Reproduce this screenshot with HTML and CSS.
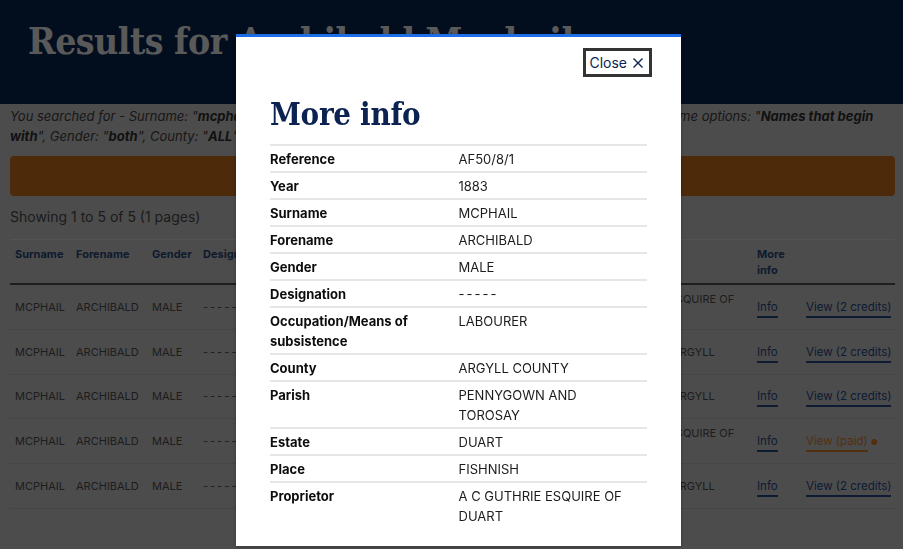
FILE: index.html
```html
<!DOCTYPE html>
<html lang="en">
<head>
    <meta charset="UTF-8">
    <meta name="viewport" content="width=device-width, initial-scale=1.0">
    <title>Results for Archibald Mcphail</title>
    <link rel="stylesheet" href="styles.css">
</head>
<body>
    <header class="page-header">
        <h1>Results for Archibald Mcphail</h1>
    </header>

    <main class="content">
        <p class="searched">
            You searched for - Surname: "<b>mcphail</b>", Surname options: "<b>Exact spellings</b>", Forename: "<b>archibald</b>", Forename options: "<b>Names that begin with</b>", Gender: "<b>both</b>", County: "<b>ALL</b>"
        </p>
        <div class="notice"></div>
        <p class="showing">Showing 1 to 5 of 5 (1 pages)</p>

        <table class="results">
            <colgroup>
                <col style="width: 61px">
                <col style="width: 76px">
                <col style="width: 51px">
                <col style="width: 80px">
                <col style="width: 100px">
                <col style="width: 213px">
                <col style="width: 161px">
                <col style="width: 49px">
                <col style="width: 94px">
            </colgroup>
            <thead>
                <tr>
                    <th>Surname</th>
                    <th>Forename</th>
                    <th>Gender</th>
                    <th>Designation</th>
                    <th>Occupation</th>
                    <th>Parish</th>
                    <th>Proprietor</th>
                    <th>More info</th>
                    <th></th>
                </tr>
            </thead>
            <tbody id="rows"></tbody>
        </table>
    </main>

    <div class="overlay">
        <div class="modal">
            <div class="modal-top">
                <button class="close-btn">Close
                    <svg width="12" height="12" viewBox="0 0 12 12"><path d="M1.5 1.5L10.5 10.5M10.5 1.5L1.5 10.5" stroke="#0c2352" stroke-width="1.4" fill="none"/></svg>
                </button>
            </div>
            <h2>More info</h2>
            <table class="info">
                <tr><th>Reference</th><td>AF50/8/1</td></tr>
                <tr><th>Year</th><td>1883</td></tr>
                <tr><th>Surname</th><td>MCPHAIL</td></tr>
                <tr><th>Forename</th><td>ARCHIBALD</td></tr>
                <tr><th>Gender</th><td>MALE</td></tr>
                <tr><th>Designation</th><td class="dashes">-----</td></tr>
                <tr><th>Occupation/Means of subsistence</th><td>LABOURER</td></tr>
                <tr><th>County</th><td>ARGYLL COUNTY</td></tr>
                <tr><th>Parish</th><td>PENNYGOWN AND TOROSAY</td></tr>
                <tr><th>Estate</th><td>DUART</td></tr>
                <tr><th>Place</th><td>FISHNISH</td></tr>
                <tr><th>Proprietor</th><td>A C GUTHRIE ESQUIRE OF DUART</td></tr>
            </table>
        </div>
    </div>

    <script>
        const results = [
            { proprietor: 'A C GUTHRIE ESQUIRE OF DUART', paid: false },
            { proprietor: 'THE DUKE OF ARGYLL', paid: false },
            { proprietor: 'THE DUKE OF ARGYLL', paid: false },
            { proprietor: 'A C GUTHRIE ESQUIRE OF DUART', paid: true },
            { proprietor: 'THE DUKE OF ARGYLL', paid: false }
        ];

        const rows = document.getElementById('rows');

        results.forEach(r => {
            const tr = document.createElement('tr');
            const view = r.paid
                ? '<a class="view paid" href="#">View (paid)</a> <span class="dot">&#9679;</span>'
                : '<a class="view" href="#">View (2 credits)</a>';
            tr.innerHTML = `
                <td>MCPHAIL</td>
                <td>ARCHIBALD</td>
                <td>MALE</td>
                <td class="dashes">-----</td>
                <td>LABOURER</td>
                <td>PENNYGOWN AND TOROSAY</td>
                <td>${r.proprietor}</td>
                <td><a class="info-link" href="#">Info</a></td>
                <td class="nowrap">${view}</td>`;
            rows.appendChild(tr);
        });
    </script>
</body>
</html>
```

FILE: styles.css
```css
body {
    margin: 0;
    font-family: Inter, "Noto Sans", sans-serif;
    background-color: #dadada;
    color: #444444;
    overflow: hidden;
}

.page-header {
    background-color: #062556;
    height: 104px;
    padding: 0 28px;
}

.page-header h1 {
    margin: 0;
    padding-top: 19px;
    font-family: "DejaVu Serif", serif;
    font-stretch: condensed;
    font-size: 37px;
    font-weight: bold;
    color: #ffffff;
    letter-spacing: -0.5px;
}

.content {
    padding: 0 8px 0 10px;
}

.searched {
    margin: 0;
    padding-top: 2px;
    font-size: 13px;
    line-height: 20px;
    font-style: italic;
    color: #444444;
}

.searched b {
    color: #333333;
}

.notice {
    margin-top: 10px;
    height: 40px;
    background-color: #dc781f;
    border-radius: 4px;
}

.showing {
    margin: 12px 0 14px;
    font-size: 14px;
    color: #505050;
}

.results {
    width: 885px;
    table-layout: fixed;
    border-collapse: collapse;
    border-top: 1px solid #eeeeee;
    font-size: 11px;
}

.results th {
    text-align: left;
    vertical-align: top;
    padding: 6px 5px 5px;
    line-height: 16px;
    font-weight: bold;
    color: #2b4d83;
    border-bottom: 2px solid #565656;
}

.results td {
    padding: 6px 5px;
    height: 31.5px;
    line-height: 16px;
    color: #555555;
    border-bottom: 1px solid #c8c8c8;
    vertical-align: middle;
}

.results td.nowrap {
    white-space: nowrap;
    padding-right: 0;
}

.dashes {
    letter-spacing: 2px;
}

.info-link,
.view {
    color: #2a4f94;
    text-decoration: none;
    border-bottom: 2px solid #2a4f94;
    padding-bottom: 2px;
    font-size: 11.5px;
}

.view.paid {
    color: #e8892c;
    border-bottom-color: #e8892c;
}

.dot {
    color: #e8892c;
    font-size: 8px;
}

.overlay {
    position: fixed;
    inset: 0;
    background-color: rgba(0, 0, 0, 0.65);
}

.modal {
    position: absolute;
    top: 34px;
    left: 236px;
    width: 377px;
    padding: 11px 34px 18px;
    background-color: #ffffff;
    border-top: 3px solid #1d6ee6;
    box-shadow: 0 1px 4px rgba(0, 0, 0, 0.3);
}

.modal-top {
    display: flex;
    justify-content: flex-end;
    margin-right: -5px;
}

.close-btn {
    display: flex;
    align-items: center;
    gap: 5px;
    height: 29px;
    padding: 0 5px 0 3px;
    background: #ffffff;
    border: 3px solid #333333;
    font-family: Inter, "Noto Sans", sans-serif;
    font-size: 14px;
    color: #0c2352;
    cursor: pointer;
}

.modal h2 {
    margin: 18px 0 11px;
    font-family: "DejaVu Serif", serif;
    font-stretch: condensed;
    font-size: 31px;
    line-height: 38px;
    font-weight: bold;
    color: #0c2352;
    letter-spacing: -0.3px;
}

.info {
    width: 100%;
    border-collapse: collapse;
    font-size: 13px;
    line-height: 20px;
}

.info tr {
    border-top: 2px solid #e6e6e6;
}

.info th,
.info td {
    width: 50%;
    text-align: left;
    vertical-align: top;
    padding: 3px 0 2px;
}

.info th {
    font-weight: bold;
    color: #0d0d0d;
    padding-right: 10px;
}

.info td {
    color: #1c1c1c;
    padding-right: 8px;
}
```
